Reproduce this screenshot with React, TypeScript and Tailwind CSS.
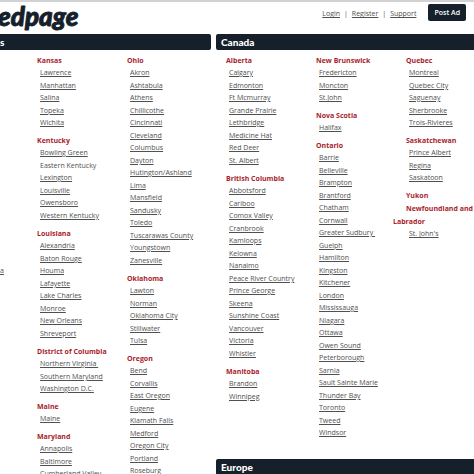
type Group = { name: string; cities: string[]; plain?: string; tight?: boolean };

const kansas: Group[] = [
  { name: 'Kansas', cities: ['Lawrence', 'Manhattan', 'Salina', 'Topeka', 'Wichita'] },
  {
    name: 'Kentucky',
    cities: ['Bowling Green', 'Eastern Kentucky', 'Lexington', 'Louisville', 'Owensboro', 'Western Kentucky'],
    plain: 'Eastern Kentucky',
  },
  {
    name: 'Louisiana',
    cities: ['Alexandria', 'Baton Rouge', 'Houma', 'Lafayette', 'Lake Charles', 'Monroe', 'New Orleans', 'Shreveport'],
  },
  { name: 'District of Columbia', cities: ['Northern Virginia\u00a0', 'Southern Maryland', 'Washington D.C.'] },
  { name: 'Maine', cities: ['Maine'] },
  { name: 'Maryland', cities: ['Annapolis', 'Baltimore', 'Cumberland Valley'] },
];

const ohio: Group[] = [
  {
    name: 'Ohio',
    cities: [
      'Akron', 'Ashtabula', 'Athens', 'Chillicothe', 'Cincinnati', 'Cleveland', 'Columbus', 'Dayton',
      'Hutington/Ashland', 'Lima', 'Mansfield', 'Sandusky', 'Toledo', 'Tuscarawas County', 'Youngstown', 'Zanesville',
    ],
  },
  { name: 'Oklahoma', cities: ['Lawton', 'Norman', 'Oklahoma City', 'Stillwater', 'Tulsa'] },
  {
    name: 'Oregon',
    cities: [
      'Bend', 'Corvallis', 'East Oregon', 'Eugene', 'Klamath Falls', 'Medford', 'Oregon City', 'Portland', 'Roseburg',
    ],
  },
];

const canada: Group[][] = [
  [
    {
      name: 'Alberta',
      cities: [
        'Calgary', 'Edmonton', 'Ft Mcmurray', 'Grande Prairie', 'Lethbridge', 'Medicine Hat', 'Red Deer', 'St. Albert',
      ],
    },
    {
      name: 'British Columbia',
      cities: [
        'Abbotsford', 'Cariboo', 'Comox Valley', 'Cranbrook', 'Kamloops', 'Kelowna', 'Nanaimo',
        'Peace River Country', 'Prince George', 'Skeena', 'Sunshine Coast', 'Vancouver', 'Victoria', 'Whistler',
      ],
    },
    { name: 'Manitoba', cities: ['Brandon', 'Winnipeg'] },
  ],
  [
    { name: 'New Brunswick', cities: ['Fredericton', 'Moncton', 'St.John'] },
    { name: 'Nova Scotia', cities: ['Halifax'] },
    {
      name: 'Ontario',
      cities: [
        'Barrie', 'Belleville', 'Brampton', 'Brantford', 'Chatham', 'Cornwall', 'Greater Sudbury\u00a0', 'Guelph',
        'Hamilton', 'Kingston', 'Kitchener', 'London', 'Mississauga', 'Niagara', 'Ottawa', 'Owen Sound',
        'Peterborough', 'Sarnia', 'Sault Sainte Marie', 'Thunder Bay', 'Toronto', 'Tweed', 'Windsor',
      ],
    },
  ],
  [
    { name: 'Quebec', cities: ['Montreal', 'Quebec City', 'Saguenay', 'Sherbrooke', 'Trois-Rivieres'] },
    { name: 'Saskatchewan', cities: ['Prince Albert', 'Regina', 'Saskatoon'] },
    { name: 'Yukon', cities: [], tight: true },
    { name: 'Newfoundland and Labrador', cities: ["St. John's"] },
  ],
];

function Column({ groups }: { groups: Group[] }) {
  return (
    <div className="min-w-0">
      {groups.map((group) => (
        <div key={group.name} className={group.tight ? '' : 'mb-[5px]'}>
          <h3 className="indent-[13px] text-[7px] leading-[13px] font-bold text-[#a91d2b]">{group.name}</h3>
          <ul className="pl-4 whitespace-nowrap">
            {group.cities.map((city) => (
              <li key={city} className="odd:leading-[12px] even:leading-[13px]">
                {city === group.plain ? (
                  city
                ) : (
                  <a href="#" className="underline">
                    {city}
                  </a>
                )}
              </li>
            ))}
          </ul>
        </div>
      ))}
    </div>
  );
}

function RegionBar({ title, className = 'pl-[5px]' }: { title: string; className?: string }) {
  return (
    <h2
      className={`rounded-[2px] bg-[#15202a] font-['Lato','Open_Sans',sans-serif] text-[10px] leading-[16px] font-black text-white ${className}`}
    >
      {title}
    </h2>
  );
}

export default function App() {
  return (
    <div className="h-screen overflow-hidden bg-white font-['Open_Sans','Noto_Sans',sans-serif] text-[7px] text-[#505050]">
      <header className="flex h-[34px] items-start justify-between border-t-2 border-[#d2d2d2] pr-2">
        <a href="#" aria-label="edpage">
          <svg width="84" height="32" viewBox="0 0 84 32">
            <text
              x="-2"
              y="24"
              fontFamily="Lato, 'Open Sans', sans-serif"
              fontSize="26"
              fontWeight="900"
              fontStyle="italic"
              fill="#15202a"
              stroke="#15202a"
              strokeWidth="0.9"
              strokeLinejoin="round"
            >
              edpage
            </text>
          </svg>
        </a>
        <div className="flex items-center gap-3 pt-[2px]">
          <nav className="flex items-center gap-1 pt-1">
            <a href="#" className="underline">Login</a>
            <span>|</span>
            <a href="#" className="underline">Register</a>
            <span>|</span>
            <a href="#" className="underline">Support</a>
          </nav>
          <button type="button" className="rounded-[2px] bg-[#15202a] px-[6px] leading-[17px] font-semibold text-white">
            Post Ad
          </button>
        </div>
      </header>

      <main className="-mr-[9px] grid grid-cols-[211fr_267fr] gap-[5px]">
        <section className="min-w-0">
          <RegionBar title="s" className="rounded-l-none" />
          <div className="grid grid-cols-[24fr_90fr_90fr] pt-1 pr-[7px]">
            <div className="pt-[210px] leading-[13px]">
              <a href="#" className="underline">a</a>
            </div>
            <Column groups={kansas} />
            <Column groups={ohio} />
          </div>
        </section>

        <section className="min-w-0">
          <RegionBar title="Canada" />
          <div className="-ml-[3px] grid grid-cols-3 pt-1 pb-[15px]">
            {canada.map((groups) => (
              <Column key={groups[0].name} groups={groups} />
            ))}
          </div>
          <RegionBar title="Europe" />
        </section>
      </main>
    </div>
  );
}
